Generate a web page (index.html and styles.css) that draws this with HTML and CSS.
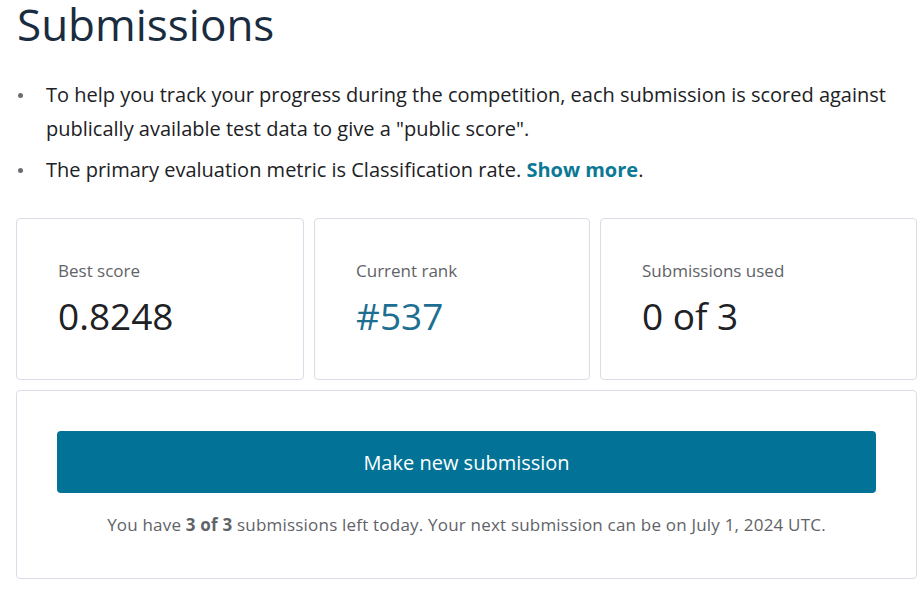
FILE: index.html
```html
<!DOCTYPE html>
<html lang="en">
<head>
<meta charset="utf-8">
<link rel="stylesheet" href="styles.css">
</head>
<body>
<div class="page">
  <h1 class="title">Submissions</h1>
  <ul class="notes">
    <li><span>To help you track your progress during the competition, each submission is scored against publically available test data to give a "public score".</span></li>
    <li><span>The primary evaluation metric is Classification rate. <a class="more" href="#">Show more</a>.</span></li>
  </ul>
  <div class="stats">
    <div class="card stat s1">
      <div class="label">Best score</div>
      <div class="value">0.8248</div>
    </div>
    <div class="card stat s2">
      <div class="label">Current rank</div>
      <div class="value rank">#537</div>
    </div>
    <div class="card stat s3">
      <div class="label">Submissions used</div>
      <div class="value">0 of 3</div>
    </div>
  </div>
  <div class="card submit">
    <button class="btn">Make new submission</button>
    <p class="left">You have <b>3 of 3</b> submissions left today. Your next submission can be on July 1, 2024 UTC.</p>
  </div>
</div>
</body>
</html>
```
FILE: styles.css
```css
html, body {
  margin: 0;
  padding: 0;
  background: #fff;
  overflow: hidden;
}
body {
  font-family: "Open Sans", "Noto Sans", sans-serif;
  color: #202124;
}
.page {
  width: 901px;
  padding-left: 16px;
}
.title {
  margin: 0;
  padding-top: 1px;
  padding-left: 1px;
  font-family: "Open Sans", sans-serif;
  font-weight: 400;
  font-size: 44px;
  line-height: 46px;
  color: #1a2c40;
}
.notes {
  list-style: none;
  margin: 31px 0 0 0;
  padding-left: 2px;
  font-size: 20px;
  line-height: 34px;
  color: #202124;
}
.notes li {
  display: flex;
  align-items: flex-start;
  margin-bottom: 7px;
}
.notes li::before {
  content: "";
  flex: none;
  width: 5px;
  height: 5px;
  border-radius: 50%;
  background: #6a6e73;
  margin-top: 15px;
  margin-right: 23px;
}
.more {
  color: #0b7896;
  font-weight: 700;
  text-decoration: none;
}
.stats {
  display: grid;
  grid-template-columns: 288px 276px 317px;
  gap: 10px;
  margin-top: 31px;
}
.card {
  border: 1px solid #dcdce9;
  border-radius: 4px;
  box-sizing: border-box;
  background: #fff;
}
.stat {
  height: 162px;
  padding: 40px 40px 0 41px;
}
.label {
  font-size: 17px;
  line-height: 24px;
  color: #5f6368;
}
.value {
  margin-top: 9px;
  font-size: 37px;
  line-height: 48px;
  color: #202124;
}
.rank {
  color: #1d6f92;
}
.submit {
  margin-top: 10px;
  padding: 40px;
  height: 189px;
  text-align: center;
}
.btn {
  display: block;
  width: 100%;
  height: 62px;
  border: 0;
  border-radius: 4px;
  background: #027396;
  color: #fff;
  font-family: "Open Sans", sans-serif;
  font-size: 20px;
  cursor: pointer;
}
.left {
  margin: 20px 0 0 0;
  font-size: 17px;
  letter-spacing: 0.2px;
  line-height: 24px;
  color: #5f6368;
}
.left b {
  font-weight: 700;
}
```
